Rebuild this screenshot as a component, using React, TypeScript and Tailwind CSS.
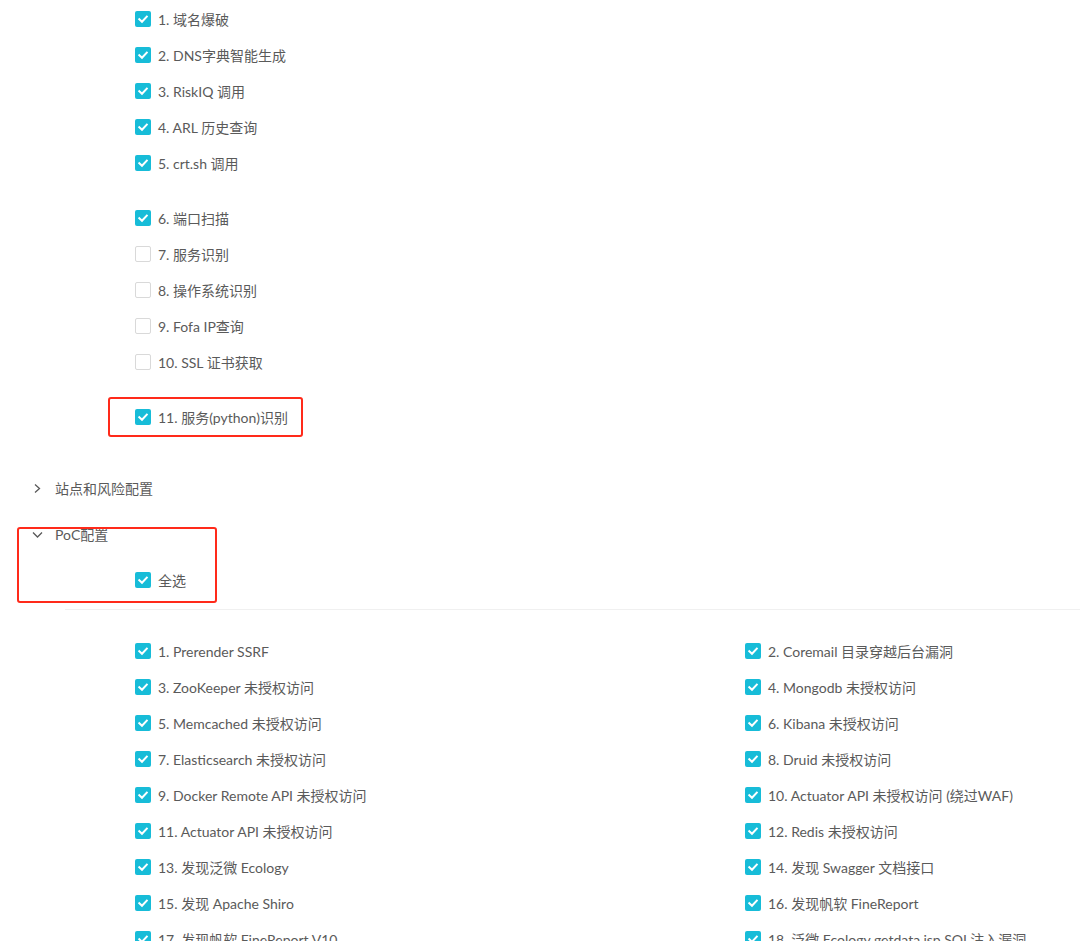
import React from "react";

const CheckBox = ({ checked }: { checked: boolean }) =>
  checked ? (
    <span className="flex h-4 w-4 shrink-0 items-center justify-center rounded-[2px] bg-[#17bcd8]">
      <svg width="12" height="12" viewBox="0 0 12 12" fill="none">
        <polyline points="2.3,6.2 5,8.8 9.8,3.6" stroke="white" strokeWidth="2" strokeLinecap="square" />
      </svg>
    </span>
  ) : (
    <span className="h-4 w-4 shrink-0 rounded-[2px] border border-[#d9d9d9] bg-white" />
  );

const Row = ({ label, checked = true }: { label: string; checked?: boolean }) => (
  <div className="flex h-9 items-center gap-[7px]">
    <CheckBox checked={checked} />
    <span>{label}</span>
  </div>
);

const domainGroup = ["1. 域名爆破", "2. DNS字典智能生成", "3. RiskIQ 调用", "4. ARL 历史查询", "5. crt.sh 调用"];

const portGroup: [string, boolean][] = [
  ["6. 端口扫描", true],
  ["7. 服务识别", false],
  ["8. 操作系统识别", false],
  ["9. Fofa IP查询", false],
  ["10. SSL 证书获取", false],
];

const pocItems = [
  "1. Prerender SSRF",
  "2. Coremail 目录穿越后台漏洞",
  "3. ZooKeeper 未授权访问",
  "4. Mongodb 未授权访问",
  "5. Memcached 未授权访问",
  "6. Kibana 未授权访问",
  "7. Elasticsearch 未授权访问",
  "8. Druid 未授权访问",
  "9. Docker Remote API 未授权访问",
  "10. Actuator API 未授权访问 (绕过WAF)",
  "11. Actuator API 未授权访问",
  "12. Redis 未授权访问",
  "13. 发现泛微 Ecology",
  "14. 发现 Swagger 文档接口",
  "15. 发现 Apache Shiro",
  "16. 发现帆软 FineReport",
  "17. 发现帆软 FineReport V10",
  "18. 泛微 Ecology getdata.jsp SQL注入漏洞",
];

export default function App() {
  return (
    <div className="relative h-[941px] w-[1080px] overflow-hidden bg-white font-['Lato','Noto_Sans_CJK_SC',sans-serif] text-[14px] text-[#5a5a5a]">
      <div className="pl-[135px] pt-[1px]">
        {domainGroup.map((l) => (
          <Row key={l} label={l} />
        ))}
        <div className="h-[19px]" />
        {portGroup.map(([l, c]) => (
          <Row key={l} label={l} checked={c} />
        ))}
        <div className="h-[19px]" />
        <div className="relative">
          <Row label="11. 服务(python)识别" />
          <div className="pointer-events-none absolute left-[-27px] top-[-2px] h-[40px] w-[195px] rounded-[3px] border-2 border-[#ff2a1a]" />
        </div>
      </div>

      <div className="relative mt-[30px]">
        <div className="flex h-[46px] items-center pl-[32px]">
          <svg width="11" height="11" viewBox="0 0 11 11" fill="none" className="mr-[12px]">
            <polyline points="3,1.5 7.5,5.5 3,9.5" stroke="#595959" strokeWidth="1.3" />
          </svg>
          <span>站点和风险配置</span>
        </div>
        <div className="flex h-[46px] items-center pl-[32px]">
          <svg width="11" height="11" viewBox="0 0 11 11" fill="none" className="mr-[12px]">
            <polyline points="1,3.5 5.5,8 10,3.5" stroke="#595959" strokeWidth="1.3" />
          </svg>
          <span>PoC配置</span>
        </div>
        <div className="pl-[135px] pt-[5px]">
          <Row label="全选" />
        </div>
        <div className="pointer-events-none absolute left-[17px] top-[62px] h-[76px] w-[200px] rounded-[3px] border-2 border-[#ff2a1a]" />
      </div>

      <div className="ml-[65px] mt-[11px] border-t border-[#f0f0f0]" />

      <div className="grid grid-cols-[610px_1fr] pl-[135px] pt-[23px]">
        {pocItems.map((l) => (
          <Row key={l} label={l} />
        ))}
      </div>
    </div>
  );
}
